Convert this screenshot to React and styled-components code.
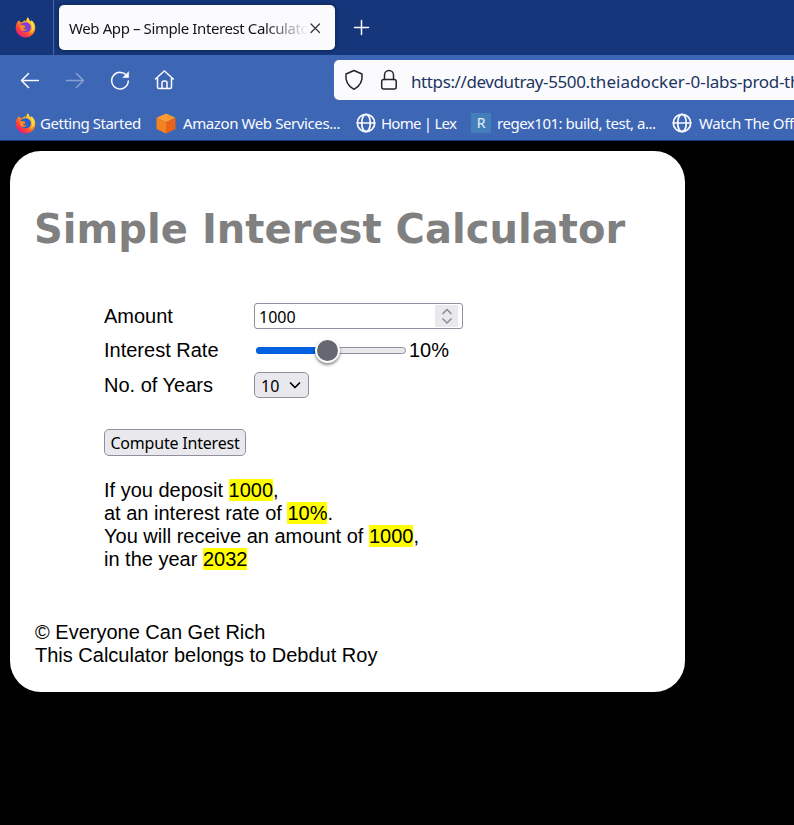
import React, { useState } from "react";
import styled, { createGlobalStyle } from "styled-components";

const GlobalStyle = createGlobalStyle`
  *, *::before, *::after { box-sizing: border-box; }
  html, body { margin: 0; background: #000; overflow: hidden; }
`;

const uiFont = `"Noto Sans", "Open Sans", sans-serif`;

const Window = styled.div`
  width: 100%;
  height: 100vh;
  overflow: hidden;
  background: #000;
  font-family: "Liberation Sans", Arial, sans-serif;
  font-size: 20px;
  line-height: 23px;
  color: #000;
`;

const TabStrip = styled.div`
  display: flex;
  align-items: center;
  height: 55px;
  background: #15367b;
`;

const FirefoxView = styled.div`
  display: flex;
  align-items: center;
  width: 54px;
  height: 55px;
  padding-left: 15px;
  border-right: 1px solid #4a65a0;
`;

const Tab = styled.div`
  display: flex;
  align-items: center;
  width: 276px;
  height: 45px;
  margin-left: 5px;
  padding: 0 13px 0 10px;
  border-radius: 5px;
  background: #fbfbfe;
  box-shadow: 0 0 4px rgba(0, 0, 0, 0.45);
`;

const TabTitle = styled.span`
  width: 239px;
  overflow: hidden;
  white-space: nowrap;
  font: 15px/24px ${uiFont};
  letter-spacing: -0.4px;
  color: #15141a;
  mask-image: linear-gradient(to right, #000 82%, transparent 100%);
`;

const NewTab = styled.div`
  display: flex;
  margin-left: 18px;
`;

const NavBar = styled.div`
  display: flex;
  align-items: center;
  height: 50px;
  padding-left: 19px;
  background: #3d66b5;
`;

const NavButton = styled.div`
  display: flex;
  flex: none;
  width: 45px;
  opacity: ${(p) => (p.$disabled ? 0.4 : 1)};
`;

const UrlBar = styled.div`
  display: flex;
  align-items: center;
  flex: 1;
  min-width: 0;
  height: 40px;
  margin-left: 135px;
  padding-left: 9px;
  border-radius: 5px 0 0 5px;
  background: #fbfbfe;
  overflow: hidden;
`;

const UrlIcon = styled.div`
  display: flex;
  flex: none;
  width: 35px;
`;

const Url = styled.span`
  flex: none;
  margin-left: -2px;
  padding-top: 3px;
  white-space: nowrap;
  font: 17px/26px ${uiFont};
  color: #20345f;
`;

const UrlPart = styled.span`
  letter-spacing: ${(p) => p.$tracking}px;
`;

const Bookmarks = styled.div`
  display: flex;
  align-items: center;
  height: 36px;
  padding: 1px 0 0 15px;
  overflow: hidden;
  border-bottom: 1px solid #15367b;
  background: #3d66b5;
`;

const Bookmark = styled.div`
  display: flex;
  flex: none;
  align-items: center;
  gap: ${(p) => p.$gap}px;
  width: ${(p) => p.$width}px;
  white-space: nowrap;
  font: 15px/22px ${uiFont};
  letter-spacing: ${(p) => p.$tracking}px;
  color: #fbfbfe;
`;

const LetterIcon = styled.span`
  flex: none;
  width: 20px;
  height: 20px;
  background: #4380bb;
  text-align: center;
  font: 14px/20px ${uiFont};
  letter-spacing: 0;
  color: #e8f0fa;
`;

const Card = styled.main`
  width: 675px;
  height: 541px;
  margin: 10px 0 0 10px;
  padding: 54px 25px 25px;
  border-radius: 31px;
  background: #fff;
`;

const Title = styled.h1`
  margin: 0 0 0 -1px;
  white-space: nowrap;
  font: bold 40px/49px Verdana, "DejaVu Sans", sans-serif;
  letter-spacing: 0.04px;
  color: #808080;
`;

const Form = styled.form`
  padding: 45px 0 0 69px;
`;

const Field = styled.div`
  display: flex;
  align-items: center;
  height: ${(p) => p.$height}px;
`;

const Label = styled.label`
  flex: none;
  width: 150px;
`;

const AmountBox = styled.div`
  display: flex;
  align-items: center;
  width: 209px;
  height: 26px;
  padding: 0 4px;
  border: 1px solid #8f8f9d;
  border-radius: 3px;
`;

const AmountInput = styled.input`
  flex: 1;
  min-width: 0;
  padding: 2px 0 0;
  border: 0;
  outline: 0;
  background: transparent;
  font: 16px/22px ${uiFont};
  color: #000;
`;

const Spinner = styled.span`
  display: flex;
  align-items: center;
  justify-content: center;
  width: 23px;
  height: 22px;
  background: #e9e9ed;
`;

const Slider = styled.div`
  position: relative;
  width: 150px;
  height: 7px;
  margin: 0 3px 0 2px;
  border: 1px solid #8f8f9d;
  border-radius: 4px;
  background: #e9e9ed;
`;

const SliderFill = styled.div`
  width: 72px;
  height: 7px;
  margin: -1px 0 0 -1px;
  border-radius: 4px 0 0 4px;
  background: #0060df;
`;

const SliderThumb = styled.div`
  position: absolute;
  left: 58px;
  top: -10px;
  width: 25px;
  height: 25px;
  border: 2px solid #fff;
  border-radius: 50%;
  background: #676774;
  box-shadow: 0 2px 3px rgba(0, 0, 0, 0.45);
`;

const YearsSelect = styled.div`
  display: flex;
  align-items: center;
  justify-content: space-between;
  width: 55px;
  height: 26px;
  padding: 0 6px;
  border: 1px solid #8f8f9d;
  border-radius: 5px;
  background: #e9e9ed;
  font: 16px/24px ${uiFont};
`;

const YearsValue = styled.span`
  padding-top: 2px;
`;

const ComputeButton = styled.button`
  display: block;
  width: 142px;
  height: 27px;
  margin: 27px 0 23px;
  padding: 2px 0 0;
  border: 1px solid #8f8f9d;
  border-radius: 5px;
  background: #e9e9ed;
  white-space: nowrap;
  font: 16px/23px ${uiFont};
  letter-spacing: -0.2px;
  color: #000;
`;

const Result = styled.p`
  margin: 0;
`;

const Highlight = styled.mark`
  background: #ff0;
  color: #000;
`;

const Footer = styled.footer`
  margin-top: 50px;
`;

function Stroke({ size, color = "#fbfbfe", width = 1.5, children }) {
  return (
    <svg width={size} height={size} viewBox={`0 0 ${size} ${size}`} fill="none" stroke={color}
      strokeWidth={width} strokeLinecap="round" strokeLinejoin="round">
      {children}
    </svg>
  );
}

function Firefox({ core, id }) {
  return (
    <svg width="21" height="21" viewBox="0 0 20 20">
      <defs>
        <linearGradient id={id} x1="0.85" y1="0.1" x2="0.2" y2="0.95">
          <stop offset="0" stopColor="#fff044" />
          <stop offset="0.4" stopColor="#ff9a20" />
          <stop offset="0.72" stopColor="#ff4236" />
          <stop offset="1" stopColor="#e31587" />
        </linearGradient>
      </defs>
      <path fill={`url(#${id})`} d="M2.5 4.2 4 3l1 2 2.2-.2C8.500 3 9 2.900 10.500 4L11.700.3c1 .5 1.600 1.400 2 2.500l1.200 1.600.8-1.400c2.200 1.800 3.600 4.300 3.600 7.300 0 5.200-4.200 9.300-9.300 9.300S.7 15.500.7 10.300c0-2.400.6-4.400 1.800-6.100Z" />
      <path fill={core} d="M5.500 6.500c2-1 3.700-1.900 6.200-1.200 2.200.6 3.700 2.600 3.500 5-.2 2.600-2.300 4.300-4.800 4.300-2.800 0-4.600-1.800-4.900-4l2.300.5 2.300-1.300-1.300-1.600-3.300-.1Z" />
      <path fill="#ff8c21" d="M5.200 7.500 9.300 8.200c.5.9-.4 1.300-1.900 1.800 0 1.700 1.600 2.500 4 1.500-1.300 2.600-5.700 2.200-6.700-.8Z" />
      <path fill="#ffdf39" d="M12 .8c2 3 4.800 5 4.300 9.800-.2 2.100-1.300 3.800-2.800 5 4.900-2 6-8 2.200-12.100l-.5 1.700Z" />
    </svg>
  );
}

function Globe() {
  return (
    <Stroke size={20} width={1.7}>
      <circle cx="10" cy="10" r="8.700" />
      <ellipse cx="10" cy="10" rx="4.300" ry="8.700" />
      <path d="M1.500 10h17" />
    </Stroke>
  );
}

function Cube() {
  return (
    <svg width="20" height="21" viewBox="0 0 20 21">
      <path fill="#ff9b30" d="m10 .5 9.500 4.300L10 9.200.5 4.800Z" />
      <path fill="#f58220" d="M.5 4.800 10 9.200v11.300L.5 16Z" />
      <path fill="#e8641b" d="M19.500 4.800 10 9.200v11.300l9.500-4.500Z" />
    </svg>
  );
}

export default function App() {
  const [amount, setAmount] = useState("1000");

  return (
    <Window>
      <GlobalStyle />
      <TabStrip>
        <FirefoxView><Firefox core="#7941d8" id="flameView" /></FirefoxView>
        <Tab>
          <TabTitle>Web App – Simple Interest Calculator</TabTitle>
          <Stroke size={14} width={1.2} color="#333"><path d="m3 3 8.500 8.500M11.500 3 3 11.500" /></Stroke>
        </Tab>
        <NewTab><Stroke size={18}><path d="M8.500 1.500v14M1.500 8.500h14" /></Stroke></NewTab>
      </TabStrip>

      <NavBar>
        <NavButton><Stroke size={20}><path d="M2.500 10.500h17M9.500 3.500l-7 7 7 7" /></Stroke></NavButton>
        <NavButton $disabled><Stroke size={20}><path d="M2.500 10.500h17M12.500 3.500l7 7-7 7" /></Stroke></NavButton>
        <NavButton>
          <Stroke size={22}>
            <path d="M18.200 7.500A8.300 8.300 0 1 0 19.300 12" />
            <path d="M19.600 3v5.500h-5.500Z" fill="#fbfbfe" strokeWidth="0.6" />
          </Stroke>
        </NavButton>
        <NavButton>
          <Stroke size={22}>
            <path d="m1.500 10 8.200-7.500a1 1 0 0 1 1.400 0L19.300 10M3.500 9v9a1.500 1.500 0 0 0 1.500 1.500h11a1.500 1.500 0 0 0 1.500-1.500V9M8 19.500V14a2 2 0 0 1 2-2h1a2 2 0 0 1 2 2v5.500" />
          </Stroke>
        </NavButton>
        <UrlBar>
          <UrlIcon><Stroke size={22} color="#24242a"><path d="M11 1.500 19 5c.7 6-1.800 12-8 15.300C4.800 17 2.300 11 3 5Z" /></Stroke></UrlIcon>
          <UrlIcon><Stroke size={22} color="#24242a"><path d="M6.500 10.500V6a4.500 4.500 0 0 1 9 0v4.500" /><rect x="3.700" y="10.500" width="14.500" height="9.500" rx="2" /></Stroke></UrlIcon>
          <Url>
            <UrlPart $tracking={-0.4}>https://devdutray-5500.</UrlPart>
            <UrlPart $tracking={0.05}>theiadocker-0-</UrlPart>
            <UrlPart $tracking={-0.3}>labs-prod-theia</UrlPart>
          </Url>
        </UrlBar>
      </NavBar>

      <Bookmarks>
        <Bookmark $width={141} $gap={4} $tracking={-0.47}><Firefox core="#2361c9" id="flameBookmark" />Getting Started</Bookmark>
        <Bookmark $width={200} $gap={7} $tracking={-0.4}><Cube />Amazon Web Services...</Bookmark>
        <Bookmark $width={115} $gap={5} $tracking={-0.75}><Globe />Home | Lex</Bookmark>
        <Bookmark $width={201} $gap={6} $tracking={-0.48}><LetterIcon>R</LetterIcon>regex101: build, test, a...</Bookmark>
        <Bookmark $width={150} $gap={7} $tracking={-0.4}><Globe />Watch The Office</Bookmark>
      </Bookmarks>

      <Card>
        <Title>Simple Interest Calculator</Title>
        <Form onSubmit={(e) => e.preventDefault()}>
          <Field $height={34}>
            <Label htmlFor="amount">Amount</Label>
            <AmountBox>
              <AmountInput id="amount" value={amount} onChange={(e) => setAmount(e.target.value)} />
              <Spinner>
                <Stroke size={18} color="#8f8f9d" width={1.7}><path d="m5 6.500 4-4 4 4M5 12l4 4 4-4" /></Stroke>
              </Spinner>
            </AmountBox>
          </Field>
          <Field $height={35}>
            <Label>Interest Rate</Label>
            <Slider><SliderFill /><SliderThumb /></Slider>
            <span>10%</span>
          </Field>
          <Field $height={34}>
            <Label>No. of Years</Label>
            <YearsSelect>
              <YearsValue>10</YearsValue>
              <Stroke size={14} color="#000" width={1.7}><path d="m2.500 5 4.500 4.500L11.500 5" /></Stroke>
            </YearsSelect>
          </Field>
          <ComputeButton type="submit">Compute Interest</ComputeButton>
          <Result>
            If you deposit <Highlight>1000</Highlight>,<br />
            at an interest rate of <Highlight>10%</Highlight>.<br />
            You will receive an amount of <Highlight>1000</Highlight>,<br />
            in the year <Highlight>2032</Highlight>
          </Result>
        </Form>
        <Footer>
          © Everyone Can Get Rich<br />
          This Calculator belongs to Debdut Roy
        </Footer>
      </Card>
    </Window>
  );
}
